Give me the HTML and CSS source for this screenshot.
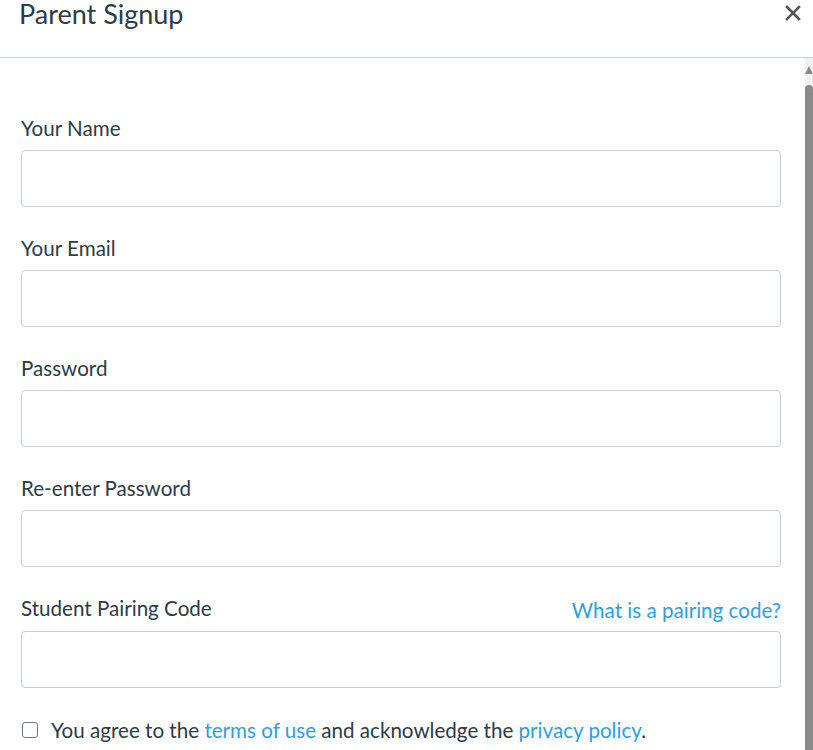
FILE: index.html
```html
<!DOCTYPE html>
<html lang="en">
<head>
    <meta charset="UTF-8">
    <title>Parent Signup</title>
    <link rel="stylesheet" href="styles.css">
</head>
<body>
    <div class="modal">
        <header class="modal-header">
            <h1>Parent Signup</h1>
            <button class="close" aria-label="Close">
                <svg width="16" height="16" viewBox="0 0 16 16"><path d="M2 2 L14 14 M14 2 L2 14" stroke="#555" stroke-width="2.6" stroke-linecap="square"/></svg>
            </button>
        </header>

        <div class="modal-body">
            <form class="signup-form">
                <div class="field">
                    <label class="field-label">Your Name</label>
                    <input type="text" class="text-input">
                </div>
                <div class="field">
                    <label class="field-label">Your Email</label>
                    <input type="email" class="text-input">
                </div>
                <div class="field">
                    <label class="field-label">Password</label>
                    <input type="password" class="text-input">
                </div>
                <div class="field">
                    <label class="field-label">Re-enter Password</label>
                    <input type="password" class="text-input">
                </div>
                <div class="field">
                    <div class="label-row">
                        <label class="field-label">Student Pairing Code</label>
                        <a href="#" class="help-link">What is a pairing code?</a>
                    </div>
                    <input type="text" class="text-input">
                </div>
                <label class="agree">
                    <span class="checkbox"></span>
                    <span>You agree to the <a href="#">terms of use</a> and acknowledge the <a href="#">privacy policy</a>.</span>
                </label>
            </form>

            <div class="scrollbar">
                <div class="scroll-arrow"></div>
                <div class="scroll-thumb"></div>
            </div>
        </div>
    </div>
</body>
</html>
```

FILE: styles.css
```css
body {
    margin: 0;
    font-family: Lato, "Noto Sans", sans-serif;
    color: #2d3b45;
    background-color: #fff;
    overflow: hidden;
}

.modal {
    width: 813px;
    height: 750px;
    display: flex;
    flex-direction: column;
    overflow: hidden;
}

.modal-header {
    height: 57px;
    border-bottom: 1px solid #c7cdd1;
    display: flex;
    justify-content: space-between;
    align-items: flex-start;
    flex-shrink: 0;
}

.modal-header h1 {
    margin: 0 0 0 19px;
    font-size: 27px;
    font-weight: 400;
    line-height: 27px;
}

.close {
    border: none;
    background: none;
    padding: 0;
    margin: 5px 11px 0 0;
    width: 18px;
    height: 18px;
    cursor: pointer;
}

.modal-body {
    flex: 1;
    display: flex;
    min-height: 0;
}

.signup-form {
    flex: 1;
    padding: 58px 24px 0 21px;
}

.field {
    margin-bottom: 29px;
}

.field-label {
    display: block;
    font-size: 20.6px;
    line-height: 24px;
    margin-bottom: 10px;
}

.label-row {
    display: flex;
    justify-content: space-between;
    align-items: baseline;
    margin-bottom: 1px;
}

.help-link {
    font-size: 20.6px;
    color: #2b9ee6;
    text-decoration: none;
    position: relative;
    top: 2px;
}

.text-input {
    display: block;
    width: 100%;
    height: 57px;
    box-sizing: border-box;
    border: 1px solid #c7cdd1;
    border-radius: 4px;
    font-family: inherit;
    font-size: 18px;
    padding: 0 12px;
}

.agree {
    display: flex;
    align-items: center;
    gap: 13px;
    font-size: 20.6px;
    line-height: 26px;
    margin-top: 3px;
    margin-left: 1px;
}

.agree a {
    color: #2b9ee6;
    text-decoration: none;
}

.checkbox {
    width: 14px;
    height: 14px;
    border: 1.5px solid #6b7780;
    border-radius: 3px;
    flex-shrink: 0;
}

.scrollbar {
    width: 8px;
    background-color: #f1f1f1;
    display: flex;
    flex-direction: column;
    align-items: center;
}

.scroll-arrow {
    margin-top: 8px;
    width: 0;
    height: 0;
    border-left: 4px solid transparent;
    border-right: 4px solid transparent;
    border-bottom: 8px solid #8a8a8a;
}

.scroll-thumb {
    margin-top: 11px;
    width: 8px;
    flex: 1;
    background-color: #8a8a8a;
    border-radius: 4px 4px 0 0;
}
```
